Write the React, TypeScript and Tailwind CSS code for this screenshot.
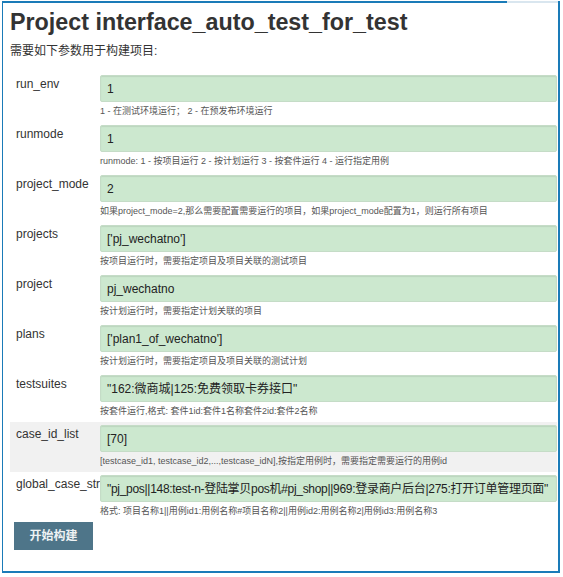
import React from "react";

type Field = {
  name: string;
  value: string;
  help: string;
  shaded?: boolean;
  tight?: boolean;
};

const fields: Field[] = [
  { name: "run_env", value: "1", help: "1 - 在测试环境运行； 2 - 在预发布环境运行" },
  {
    name: "runmode",
    value: "1",
    help: "runmode: 1 - 按项目运行 2 - 按计划运行 3 - 按套件运行 4 - 运行指定用例",
  },
  {
    name: "project_mode",
    value: "2",
    help: "如果project_mode=2,那么需要配置需要运行的项目，如果project_mode配置为1，则运行所有项目",
  },
  { name: "projects", value: "['pj_wechatno']", help: "按项目运行时，需要指定项目及项目关联的测试项目" },
  { name: "project", value: "pj_wechatno", help: "按计划运行时，需要指定计划关联的项目" },
  { name: "plans", value: "['plan1_of_wechatno']", help: "按计划运行时，需要指定项目及项目关联的测试计划" },
  {
    name: "testsuites",
    value: '"162:微商城|125:免费领取卡券接口"',
    help: "按套件运行,格式: 套件1id:套件1名称套件2id:套件2名称",
  },
  {
    name: "case_id_list",
    value: "[70]",
    help: "[testcase_id1, testcase_id2,...,testcase_idN],按指定用例时，需要指定需要运行的用例id",
    shaded: true,
  },
  {
    name: "global_case_str",
    value: '"pj_pos||148:test-n-登陆掌贝pos机#pj_shop||969:登录商户后台|275:打开订单管理页面"',
    help: "格式: 项目名称1||用例id1:用例名称#项目名称2||用例id2:用例名称2|用例id3:用例名称3",
    tight: true,
  },
];

function FieldRow({ field }: { field: Field }) {
  return (
    <div className={`flex pt-[3px] pb-[4px] ${field.shaded ? "bg-[#f1f1f1]" : ""}`}>
      <div className="w-[90px] shrink-0 overflow-hidden whitespace-nowrap pl-[6px] pt-[1px] text-[12px] leading-[16px] text-[#333]">
        {field.name}
      </div>
      <div className="min-w-0 flex-1">
        <div
          className={`flex h-[27px] items-center overflow-hidden whitespace-nowrap rounded-[2px] border border-[#c5dcc7] bg-[#cce8cf] px-[6px] text-[12px] text-[#222] shadow-[inset_0_1px_1px_rgba(0,0,0,0.08)] ${
            field.tight ? "tracking-[-0.3px]" : ""
          }`}
        >
          {field.value}
        </div>
        <div className="mt-[2px] h-[14px] whitespace-nowrap text-[9px] leading-[14px] text-[#555]">
          {field.help}
        </div>
      </div>
    </div>
  );
}

export default function App() {
  return (
    <div
      className="h-[577px] w-[563px] bg-white pl-[2px] pt-[1px]"
      style={{ fontFamily: '"Liberation Sans", Arial, "Noto Sans CJK SC", sans-serif' }}
    >
      <div className="flex h-[572px] w-[558px] flex-col border-b-2 border-l border-r-2 border-[#1a7bb8]">
        <div className="flex h-[2px]">
          <div className="flex-1 bg-[#1a7bb8]" />
          <div className="w-[51px] bg-[#d9e6ef]" />
        </div>

        <div className="pl-[7px] pt-[5px]">
          <h1 className="h-[28px] text-[23.3px] font-bold leading-[28px] text-[#333]">
            Project interface_auto_test_for_test
          </h1>
          <p className="mt-[8px] text-[12px] leading-[14px] text-[#333]">需要如下参数用于构建项目:</p>

          <div className="mt-[14px] mr-[1px]">
            {fields.map((f) => (
              <FieldRow key={f.name} field={f} />
            ))}
          </div>

          <button className="ml-[4px] h-[28px] w-[79px] bg-[#4e7589] text-[12px] font-bold text-[#eef2f4]">
            开始构建
          </button>
        </div>
      </div>
    </div>
  );
}
